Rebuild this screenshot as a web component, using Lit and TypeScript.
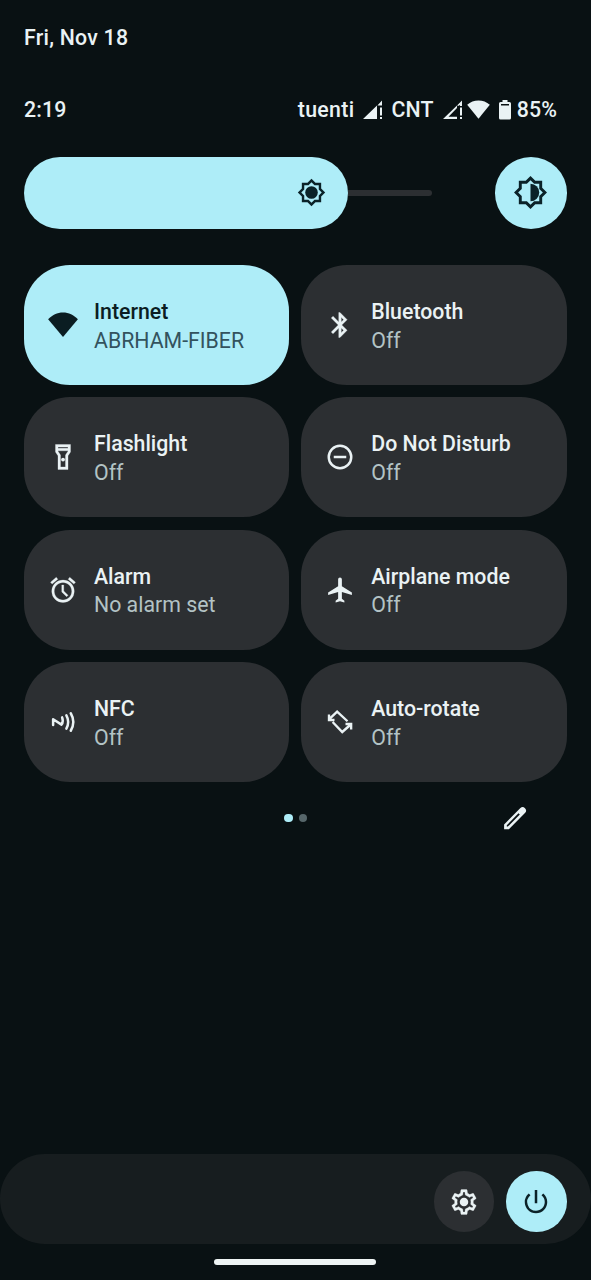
import { LitElement, html, css, svg } from "lit";
import { customElement, property } from "lit/decorators.js";

const SUN =
  "M20 8.69V4h-4.69L12 .69 8.69 4H4v4.69L.69 12 4 15.31V20h4.69L12 23.31 15.31 20H20v-4.69L23.31 12 20 8.69zm-2 5.79V18h-3.52L12 20.48 9.52 18H6v-3.52L3.52 12 6 9.52V6h3.52L12 3.52 14.48 6H18v3.52L20.48 12 18 14.48z";

const icons: Record<string, unknown> = {
  wifi: svg`<path d="M12 21.5 23.9 7.4C20.6 3.9 16.6 1.9 12 1.9S3.4 3.9.1 7.4z"/>`,
  bluetooth: svg`<path stroke="currentColor" stroke-width=".25" d="M17.71 7.71L12 2h-1v7.59L6.41 5 5 6.41 10.59 12 5 17.59 6.41 19 11 14.41V22h1l5.71-5.71-4.3-4.29 4.3-4.29zM13 5.83l1.88 1.88L13 9.59V5.83zm1.88 10.46L13 18.17v-3.76l1.88 1.88z"/>`,
  flashlight: svg`<path fill-rule="evenodd" stroke="currentColor" stroke-width=".25" d="M6 2v6l2 3v11h8V11l2-3V2H6zm10 2v1H8V4h8zm-2 6.4V20h-4v-9.6l-2-3V7h8v.4l-2 3z"/><circle cx="12" cy="14" r="1.5"/>`,
  dnd: svg`<path d="M7 11h10v2H7z"/><circle cx="12" cy="12" r="9" fill="none" stroke="currentColor" stroke-width="2"/>`,
  alarm: svg`<path stroke="currentColor" stroke-width=".2" d="M22 5.72l-4.6-3.86-1.29 1.53 4.6 3.86L22 5.72zM7.88 3.39L6.6 1.86 2 5.71l1.29 1.53 4.59-3.85zM12.6 8H11v5.5l3.9 3.9 1.15-1.15-3.45-3.45V8zM12 4a9 9 0 1 0 0 18 9 9 0 0 0 0-18zm0 16c-3.87 0-7-3.13-7-7s3.13-7 7-7 7 3.13 7 7-3.13 7-7 7z"/>`,
  airplane: svg`<path d="M21.500 16v-2l-8-5V3.500c0-.83-.67-1.500-1.500-1.500s-1.500.67-1.500 1.500V9l-8 5v2l8-2.500V19l-2 1.500V22l3.500-1 3.500 1v-1.500l-2-1.500v-5.500l8 2.500z"/>`,
  nfc: svg`<g fill="none" stroke="currentColor" stroke-width="2" stroke-linecap="round" stroke-linejoin="round"><path d="M4.1 14.4V9.800l6.700 4.300c1.200-1.700 1.300-3.800.5-5.800M14.700 6.700c1.900 3.500 1.900 7.100 0 10.600M18.200 5c2.700 4.600 2.700 9.400 0 14"/></g>`,
  rotate: svg`<g fill="none" stroke="currentColor" stroke-width="1.9"><path d="M3.4 9.700 9.700 3.700l8.300 7.700M3.200 5.900v4.500h4.400M6.100 12l7.700 8L20.600 14M16.400 13.600h4.500v4.400"/></g>`,
  brightness: svg`<path d=${SUN}/><circle cx="12" cy="12" r="5.2"/>`,
  brightnessAuto: svg`<path d=${SUN}/><path d="M12 6v12a6 6 0 0 0 0-12z"/>`,
  edit: svg`<path fill-rule="evenodd" d="M1.100 23.300v-4.900L17.400 2.100q2.200-2 4.600.1q2.200 2.400.2 4.600L5.900 23.300zM3.800 20.600h1l12-12-1.300-1.300L3.800 19.200z"/>`,
  settings: svg`<path d="M19.43 12.98c.04-.32.07-.64.07-.98 0-.34-.03-.66-.07-.98l2.11-1.65c.19-.15.24-.42.12-.64l-2-3.46c-.09-.16-.26-.25-.44-.25-.06 0-.12.01-.17.03l-2.49 1c-.52-.4-1.08-.73-1.69-.98l-.38-2.65C14.46 2.18 14.25 2 14 2h-4c-.25 0-.46.18-.49.42l-.38 2.65c-.61.25-1.17.59-1.69.98l-2.49-1c-.06-.02-.12-.03-.18-.03-.17 0-.34.09-.43.25l-2 3.46c-.13.22-.07.49.12.64l2.11 1.65c-.04.32-.07.65-.07.98 0 .33.03.66.07.98l-2.11 1.65c-.19.15-.24.42-.12.64l2 3.46c.09.16.26.25.44.25.06 0 .12-.01.17-.03l2.49-1c.52.4 1.08.73 1.69.98l.38 2.65c.03.24.24.42.49.42h4c.25 0 .46-.18.49-.42l.38-2.65c.61-.25 1.17-.59 1.69-.98l2.49 1c.06.02.12.03.18.03.17 0 .34-.09.43-.25l2-3.46c.12-.22.07-.49-.12-.64l-2.11-1.65zm-1.98-1.71c.04.31.05.52.05.73 0 .21-.02.43-.05.73l-.14 1.13.89.7 1.08.84-.7 1.21-1.27-.51-1.04-.42-.9.68c-.43.32-.84.56-1.25.73l-1.06.43-.16 1.13-.2 1.35h-1.4l-.19-1.35-.16-1.13-1.06-.43c-.43-.18-.83-.41-1.23-.71l-.91-.7-1.06.43-1.27.51-.7-1.21 1.08-.84.89-.7-.14-1.13c-.03-.31-.05-.54-.05-.74s.02-.43.05-.73l.14-1.13-.89-.7-1.08-.84.7-1.21 1.27.51 1.04.42.9-.68c.43-.32.84-.56 1.25-.73l1.06-.43.16-1.13.2-1.35h1.39l.19 1.35.16 1.13 1.06.43c.43.18.83.41 1.23.71l.91.7 1.06-.43 1.27-.51.7 1.21-1.07.85-.89.7.14 1.13z" stroke="currentColor" stroke-width=".2"/><circle cx="12" cy="12" r="3.400"/>`,
  power: svg`<path d="M13 2.400h-2V13h2V2.400zm4.830 2.770l-1.420 1.420A6.920 6.920 0 0119 12c0 3.870-3.130 7-7 7A6.995 6.995 0 017.580 6.580L6.170 5.170A8.932 8.932 0 003 12a9 9 0 0018 0c0-2.740-1.230-5.180-3.170-6.830z"/>`,
};

@customElement("qs-icon")
class QsIcon extends LitElement {
  static styles = css`
    :host { display: block; width: 30px; height: 30px; flex: none; }
    .glyph { display: block; width: 100%; height: 100%; fill: currentColor; }
  `;
  @property() name = "";
  render() {
    return html`<svg class="glyph" viewBox="0 0 24 24">${icons[this.name]}</svg>`;
  }
}

@customElement("qs-tile")
class QsTile extends LitElement {
  static styles = css`
    :host { display: block; }
    .tile {
      box-sizing: border-box; height: 120px; border-radius: 46px; padding: 0 24px;
      display: flex; align-items: center; gap: 16px;
      background: #2c2f32; color: #eaf2f4;
    }
    .active { background: #aeedf8; color: #0b1d22; }
    .label { font-weight: 500; }
    .sub { color: #b3c3c5; }
    .active .sub { color: #33535e; }
    .text { line-height: 28.4px; white-space: nowrap; padding-top: 3px; }
  `;
  @property() icon = "";
  @property() label = "";
  @property() sub = "";
  @property({ type: Boolean }) active = false;
  render() {
    return html`<div class="tile ${this.active ? "active" : ""}">
      <qs-icon name=${this.icon}></qs-icon>
      <div class="text">
        <div class="label">${this.label}</div>
        <div class="sub">${this.sub}</div>
      </div>
    </div>`;
  }
}

const tiles = [
  { icon: "wifi", label: "Internet", sub: "ABRHAM-FIBER", active: true },
  { icon: "bluetooth", label: "Bluetooth", sub: "Off" },
  { icon: "flashlight", label: "Flashlight", sub: "Off" },
  { icon: "dnd", label: "Do Not Disturb", sub: "Off" },
  { icon: "alarm", label: "Alarm", sub: "No alarm set" },
  { icon: "airplane", label: "Airplane mode", sub: "Off" },
  { icon: "nfc", label: "NFC", sub: "Off" },
  { icon: "rotate", label: "Auto-rotate", sub: "Off" },
];

@customElement("app-root")
class AppRoot extends LitElement {
  static styles = css`
    :host {
      display: flex; flex-direction: column; box-sizing: border-box;
      width: 591px; height: 1280px; overflow: hidden;
      background: #091113; color: #eaf2f4;
      font: 400 21.3px/28px Roboto, sans-serif;
    }
    .date { margin: 24px 24px 0; font-weight: 500; letter-spacing: 0.25px; }
    .status {
      margin: 44px 34px 0 24px; height: 28px; display: flex; align-items: center;
      font-weight: 500; white-space: nowrap; letter-spacing: 0.15px;
    }
    .clock { flex: 1; }
    .carrier { letter-spacing: 0.35px; }
    .status svg { display: block; fill: currentColor; flex: none; }
    .sig1 { margin: 0 9px 0 8px; }
    .sig2 { margin: 0 4px 0 9px; }
    .batt { margin: 0 6px 0 9px; }
    .brightness { margin: 32.5px 24px 0; height: 72px; display: flex; align-items: center; justify-content: space-between; }
    .slider { display: flex; align-items: center; width: 408px; }
    .fill {
      box-sizing: border-box; width: 324px; height: 72px; border-radius: 36px; background: #aeedf8;
      display: flex; align-items: center; justify-content: flex-end; padding-right: 22px; color: #0b2228;
    }
    .fill qs-icon { width: 29px; height: 29px; }
    .track { flex: 1; height: 6px; border-radius: 0 3px 3px 0; background: #2c2f32; }
    .round { display: flex; align-items: center; justify-content: center; border-radius: 50%; }
    .auto { width: 72.500px; height: 72px; background: #aeedf8; color: #0b2228; }
    .auto qs-icon { width: 35px; height: 35px; }
    .tiles { margin: 36.500px 24.500px 0 24px; display: grid; grid-template-columns: 1fr 1fr; gap: 12.400px 12px; }
    .pager { margin: 18px 24px 0; height: 36px; display: grid; grid-template-columns: 1fr auto 1fr; align-items: center; }
    .dots { grid-column: 2; display: flex; gap: 6px; }
    .dot { width: 8.400px; height: 8.400px; border-radius: 50%; background: #56666a; }
    .on { background: #aeedf8; }
    .edit { justify-self: end; width: 24px; height: 24px; margin-right: 40px; }
    .space { flex: 1; }
    .footer {
      box-sizing: border-box; height: 90px; border-radius: 45px; background: #171d1f; padding: 5px 24.500px 0;
      display: flex; align-items: center; justify-content: flex-end; gap: 12px;
    }
    .btn { width: 60.500px; height: 60.500px; background: #2c2f32; }
    .power { background: #aeedf8; color: #0b2228; }
    .handle { width: 162px; height: 6px; border-radius: 3px; background: #eef4f4; margin: 15px 0 15px 214px; }
  `;
  render() {
    return html`
      <div class="date">Fri, Nov 18</div>
      <div class="status">
        <span class="clock">2:19</span>
        <span class="carrier">tuenti</span>
        <svg class="sig1" width="20" height="20" viewBox="0 0 20 20">
          <path d="M0 19 14 5.500v13.500zM19 .5v5h-4.600zM17 7.500h2v8h-2zM17 17h2v2h-2z" />
        </svg>
        <span>CNT</span>
        <svg class="sig2" width="20" height="20" viewBox="0 0 20 20">
          <path fill-rule="evenodd" d="M0 19 14 5.500V8L5.500 16.700H14V19zM19 .5v5.500h-2V5l-2.500 1.300V5zM17 7.500h2v8h-2zM17 17h2v2h-2z" />
        </svg>
        <svg width="23" height="21" viewBox="0 0 23 21">
          <path d="M11.500 18.700 22.800 4.800C19.600 1.900 15.800.4 11.500.4S3.400 1.900.2 4.800z" />
        </svg>
        <svg class="batt" width="12" height="21" viewBox="0 0 12 21">
          <path fill-rule="evenodd" d="M3.500 0h5v2h2q1.500 0 1.500 1.500v14.500q0 1.500-1.500 1.500h-9Q0 19.500 0 18V3.500Q0 2 1.500 2h2zM2 3.900v1.500h8V3.900z" />
        </svg>
        <span>85%</span>
      </div>
      <div class="brightness">
        <div class="slider">
          <div class="fill"><qs-icon name="brightness"></qs-icon></div>
          <div class="track"></div>
        </div>
        <div class="round auto"><qs-icon name="brightnessAuto"></qs-icon></div>
      </div>
      <div class="tiles">
        ${tiles.map(
          (t) => html`<qs-tile .icon=${t.icon} .label=${t.label} .sub=${t.sub} .active=${!!t.active}></qs-tile>`
        )}
      </div>
      <div class="pager">
        <div class="dots"><div class="dot on"></div><div class="dot"></div></div>
        <qs-icon class="edit" name="edit"></qs-icon>
      </div>
      <div class="space"></div>
      <div class="footer">
        <div class="round btn"><qs-icon name="settings"></qs-icon></div>
        <div class="round btn power"><qs-icon name="power"></qs-icon></div>
      </div>
      <div class="handle"></div>
    `;
  }
}
